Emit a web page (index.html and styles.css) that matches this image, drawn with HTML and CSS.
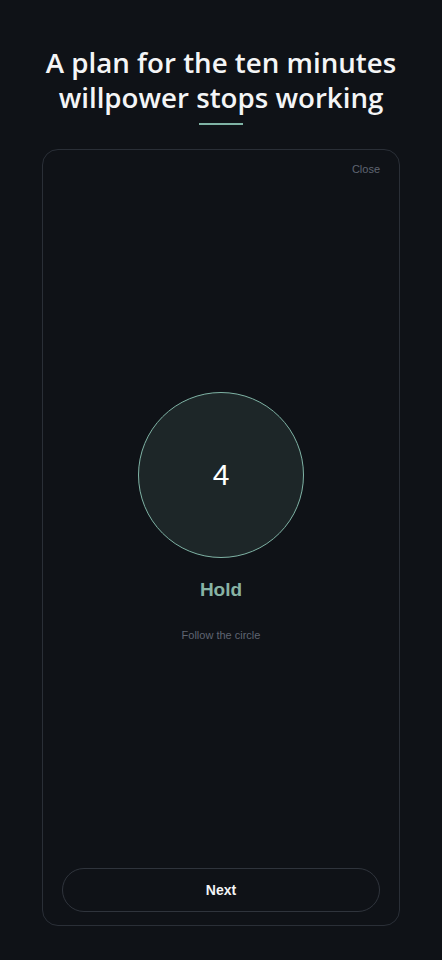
FILE: index.html
```html
<!DOCTYPE html>
<html>
<head>
	<meta charset="UTF-8">
	<title>Breathe</title>
	<link rel="stylesheet" href="styles.css">
</head>
<body>
	<div class="page">
		<h1 class="title">A plan for the ten minutes willpower stops working</h1>
		<div class="rule"></div>
		<div class="card">
			<div class="card_top">
				<span class="close">Close</span>
			</div>
			<div class="card_main">
				<div class="circle"><span>4</span></div>
				<div class="phase">Hold</div>
				<div class="hint">Follow the circle</div>
			</div>
			<div class="btn">Next</div>
		</div>
	</div>
</body>
</html>
```

FILE: styles.css
```css
html,body{
	margin: 0px;
	padding: 0px;
	background: #0f1217;
}
.page{
	width: 442px;
	height: 960px;
	box-sizing: border-box;
	padding: 45px 42px 34px;
	display: flex;
	flex-direction: column;
	align-items: center;
	font-family: "Liberation Sans", Arial, sans-serif;
}
.title{
	margin: 0px;
	font-family: "Open Sans", "Noto Sans", sans-serif;
	font-weight: 600;
	font-size: 27.7px;
	line-height: 35px;
	color: #f4f5f6;
	text-align: center;
	width: 360px;
}
.rule{
	width: 44px;
	height: 2px;
	background: #7fb3a5;
	margin-top: 8px;
}
.card{
	margin-top: 24px;
	width: 100%;
	flex: 1;
	border: 1px solid #2a2f37;
	border-radius: 16px;
	box-sizing: border-box;
	display: flex;
	flex-direction: column;
	padding: 12px 19px 13px;
}
.card_top{
	display: flex;
	justify-content: flex-end;
}
.close{
	font-size: 11px;
	color: #5f6572;
	line-height: 14px;
}
.card_main{
	flex: 1;
	display: flex;
	flex-direction: column;
	align-items: center;
	justify-content: center;
	padding-bottom: 12px;
}
.circle{
	width: 166px;
	height: 166px;
	box-sizing: border-box;
	border-radius: 50%;
	border: 1px solid #7fb3a5;
	background: #1d2628;
	display: flex;
	align-items: center;
	justify-content: center;
	color: #ffffff;
	font-size: 30px;
}
.phase{
	margin-top: 20px;
	font-size: 19px;
	font-weight: bold;
	color: #88b3a4;
	line-height: 24px;
}
.hint{
	margin-top: 27px;
	font-size: 11px;
	color: #5f6572;
}
.btn{
	height: 44px;
	border: 1px solid #2f343c;
	border-radius: 22px;
	box-sizing: border-box;
	display: flex;
	align-items: center;
	justify-content: center;
	color: #f4f5f6;
	font-weight: bold;
	font-size: 14px;
}
```
